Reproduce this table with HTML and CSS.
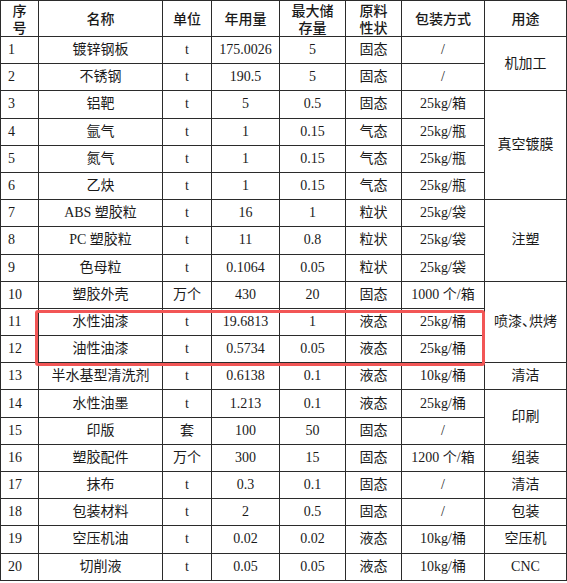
FILE: index.html
```html
<!DOCTYPE html>
<html lang="zh-CN">
<head>
<meta charset="utf-8">
<title>原辅材料表</title>
<link rel="stylesheet" href="styles.css">
</head>
<body>
<div class="wrap">
<table class="mat">
<colgroup>
<col class="c1"><col class="c2"><col class="c3"><col class="c4"><col class="c5"><col class="c6"><col class="c7"><col class="c8">
</colgroup>
<thead>
<tr class="head">
<th>序<br>号</th><th>名称</th><th>单位</th><th>年用量</th><th>最大储<br>存量</th><th>原料<br>性状</th><th>包装方式</th><th>用途</th>
</tr>
</thead>
<tbody>
<tr><td class="no">1</td><td>镀锌钢板</td><td>t</td><td>175.0026</td><td>5</td><td>固态</td><td>/</td><td rowspan="2">机加工</td></tr>
<tr><td class="no">2</td><td>不锈钢</td><td>t</td><td>190.5</td><td>5</td><td>固态</td><td>/</td></tr>
<tr><td class="no">3</td><td>铝靶</td><td>t</td><td>5</td><td>0.5</td><td>固态</td><td>25kg/箱</td><td rowspan="4">真空镀膜</td></tr>
<tr><td class="no">4</td><td>氩气</td><td>t</td><td>1</td><td>0.15</td><td>气态</td><td>25kg/瓶</td></tr>
<tr><td class="no">5</td><td>氮气</td><td>t</td><td>1</td><td>0.15</td><td>气态</td><td>25kg/瓶</td></tr>
<tr><td class="no">6</td><td>乙炔</td><td>t</td><td>1</td><td>0.15</td><td>气态</td><td>25kg/瓶</td></tr>
<tr><td class="no">7</td><td>ABS 塑胶粒</td><td>t</td><td>16</td><td>1</td><td>粒状</td><td>25kg/袋</td><td rowspan="3">注塑</td></tr>
<tr><td class="no">8</td><td>PC 塑胶粒</td><td>t</td><td>11</td><td>0.8</td><td>粒状</td><td>25kg/袋</td></tr>
<tr><td class="no">9</td><td>色母粒</td><td>t</td><td>0.1064</td><td>0.05</td><td>粒状</td><td>25kg/袋</td></tr>
<tr><td class="no">10</td><td>塑胶外壳</td><td>万个</td><td>430</td><td>20</td><td>固态</td><td>1000 个/箱</td><td rowspan="3" class="tight">喷漆、烘烤</td></tr>
<tr><td class="no">11</td><td>水性油漆</td><td>t</td><td>19.6813</td><td>1</td><td>液态</td><td>25kg/桶</td></tr>
<tr><td class="no">12</td><td>油性油漆</td><td>t</td><td>0.5734</td><td>0.05</td><td>液态</td><td>25kg/桶</td></tr>
<tr><td class="no">13</td><td>半水基型清洗剂</td><td>t</td><td>0.6138</td><td>0.1</td><td>液态</td><td>10kg/桶</td><td>清洁</td></tr>
<tr><td class="no">14</td><td>水性油墨</td><td>t</td><td>1.213</td><td>0.1</td><td>液态</td><td>25kg/桶</td><td rowspan="2">印刷</td></tr>
<tr><td class="no">15</td><td>印版</td><td>套</td><td>100</td><td>50</td><td>固态</td><td>/</td></tr>
<tr><td class="no">16</td><td>塑胶配件</td><td>万个</td><td>300</td><td>15</td><td>固态</td><td>1200 个/箱</td><td>组装</td></tr>
<tr><td class="no">17</td><td>抹布</td><td>t</td><td>0.3</td><td>0.1</td><td>固态</td><td>/</td><td>清洁</td></tr>
<tr><td class="no">18</td><td>包装材料</td><td>t</td><td>2</td><td>0.5</td><td>固态</td><td>/</td><td>包装</td></tr>
<tr><td class="no">19</td><td>空压机油</td><td>t</td><td>0.02</td><td>0.02</td><td>液态</td><td>10kg/桶</td><td>空压机</td></tr>
<tr><td class="no">20</td><td>切削液</td><td>t</td><td>0.05</td><td>0.05</td><td>液态</td><td>10kg/桶</td><td>CNC</td></tr>
</tbody>
</table>
<div class="highlight"></div>
</div>
</body>
</html>
```

FILE: styles.css
```css
html, body {
  margin: 0;
  padding: 0;
  background: #ffffff;
}

.wrap {
  position: relative;
  width: 567px;
}

.mat {
  border-collapse: collapse;
  table-layout: fixed;
  width: 566px;
  font-family: "Liberation Serif", "Noto Sans CJK SC", serif;
  font-size: 14px;
  color: #1a1a1a;
}

.c1 { width: 38px; }
.c2 { width: 124px; }
.c3 { width: 49px; }
.c4 { width: 68px; }
.c5 { width: 66px; }
.c6 { width: 56px; }
.c7 { width: 83px; }
.c8 { width: 82px; }

.mat th,
.mat td {
  border: 1px solid #2b2b2b;
  padding: 0;
  text-align: center;
  vertical-align: middle;
  white-space: nowrap;
  overflow: hidden;
}

.mat th {
  font-family: "Noto Sans CJK SC", sans-serif;
  font-weight: 500;
  line-height: 17px;
  font-size: 14px;
}

.head {
  height: 36px;
}

.mat tbody tr {
  height: 27.2px;
}

.mat td {
  line-height: 16px;
}

.mat td.no {
  text-align: left;
  padding-left: 7px;
}

.mat td.tight {
  font-feature-settings: "halt" 1;
}

.highlight {
  position: absolute;
  left: 35px;
  top: 310px;
  width: 450px;
  height: 56px;
  box-sizing: border-box;
  border: 3px solid #f25656;
  border-radius: 3px;
  pointer-events: none;
}
```
